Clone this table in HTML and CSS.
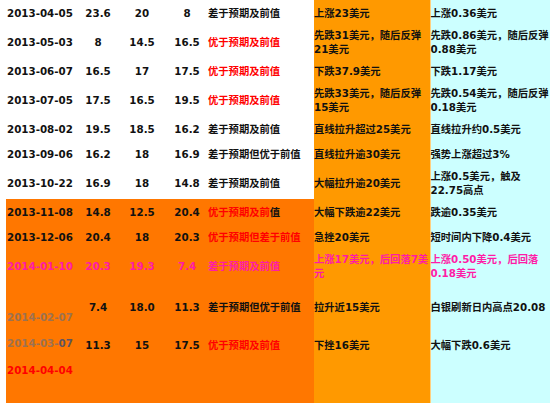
FILE: index.html
```html
<!DOCTYPE html>
<html>
<head>
<meta charset="utf-8">
<link rel="stylesheet" href="styles.css">
</head>
<body>
<table class="data">
  <colgroup>
    <col class="c-date"><col class="c-a"><col class="c-b"><col class="c-c"><col class="c-txt"><col class="c-gold"><col class="c-silver">
  </colgroup>
  <tbody>
    <tr class="one">
      <td class="date">2013-04-05</td><td class="num">23.6</td><td class="num">20</td><td class="num">8</td>
      <td class="txt">差于预期及前值</td><td class="gold">上涨23美元</td><td class="silver">上涨0.36美元</td>
    </tr>
    <tr class="two">
      <td class="date">2013-05-03</td><td class="num">8</td><td class="num">14.5</td><td class="num">16.5</td>
      <td class="txt red">优于预期及前值</td><td class="gold">先跌31美元，随后反弹<br>21美元</td><td class="silver">先跌0.86美元，随后反弹<br>0.88美元</td>
    </tr>
    <tr class="one">
      <td class="date">2013-06-07</td><td class="num">16.5</td><td class="num">17</td><td class="num">17.5</td>
      <td class="txt red">优于预期及前值</td><td class="gold">下跌37.9美元</td><td class="silver">下跌1.17美元</td>
    </tr>
    <tr class="two">
      <td class="date">2013-07-05</td><td class="num">17.5</td><td class="num">16.5</td><td class="num">19.5</td>
      <td class="txt red">优于预期及前值</td><td class="gold">先跌33美元，随后反弹<br>15美元</td><td class="silver">先跌0.54美元，随后反弹<br>0.18美元</td>
    </tr>
    <tr class="one">
      <td class="date">2013-08-02</td><td class="num">19.5</td><td class="num">18.5</td><td class="num">16.2</td>
      <td class="txt">差于预期及前值</td><td class="gold">直线拉升超过25美元</td><td class="silver">直线拉升约0.5美元</td>
    </tr>
    <tr class="one">
      <td class="date">2013-09-06</td><td class="num">16.2</td><td class="num">18</td><td class="num">16.9</td>
      <td class="txt">差于预期但优于前值</td><td class="gold">直线拉升逾30美元</td><td class="silver">强势上涨超过3%</td>
    </tr>
    <tr class="two">
      <td class="date">2013-10-22</td><td class="num">16.9</td><td class="num">18</td><td class="num">14.8</td>
      <td class="txt">差于预期及前值</td><td class="gold">大幅拉升逾20美元</td><td class="silver">上涨0.5美元，触及<br>22.75高点</td>
    </tr>
    <tr class="one low">
      <td class="date">2013-11-08</td><td class="num">14.8</td><td class="num">12.5</td><td class="num">20.4</td>
      <td class="txt"><span class="red">优于预期及前</span>值</td><td class="gold">大幅下跌逾22美元</td><td class="silver">跌逾0.35美元</td>
    </tr>
    <tr class="one low">
      <td class="date">2013-12-06</td><td class="num">20.4</td><td class="num">18</td><td class="num">20.3</td>
      <td class="txt red">优于预期但差于前值</td><td class="gold">急挫20美元</td><td class="silver">短时间内下降0.4美元</td>
    </tr>
    <tr class="two low pink">
      <td class="date">2014-01-10</td><td class="num">20.3</td><td class="num">19.3</td><td class="num">7.4</td>
      <td class="txt">差于预期及前值</td><td class="gold">上涨17美元，后回落7美<br>元</td><td class="silver">上涨0.50美元，后回落<br>0.18美元</td>
    </tr>
    <tr class="tall low">
      <td class="date grey drop">2014-02-07</td><td class="num">7.4</td><td class="num">18.0</td><td class="num">11.3</td>
      <td class="txt">差于预期但优于前值</td><td class="gold">拉升近15美元</td><td class="silver">白银刷新日内高点20.08</td>
    </tr>
    <tr class="one low">
      <td class="date grey lift">2014-03-<span class="dark">07</span></td><td class="num">11.3</td><td class="num">15</td><td class="num">17.5</td>
      <td class="txt red">优于预期及前值</td><td class="gold">下挫16美元</td><td class="silver">大幅下跌0.6美元</td>
    </tr>
    <tr class="one low">
      <td class="date red">2014-04-04</td><td class="num"></td><td class="num"></td><td class="num"></td>
      <td class="txt"></td><td class="gold"></td><td class="silver"></td>
    </tr>
    <tr class="filler low">
      <td class="date"></td><td class="num"></td><td class="num"></td><td class="num"></td>
      <td class="txt"></td><td class="gold"></td><td class="silver"></td>
    </tr>
  </tbody>
</table>
</body>
</html>
```
FILE: styles.css
```css
html, body {
  margin: 0;
  padding: 0;
  background: #ffffff;
}

body {
  padding-left: 6px;
  overflow: hidden;
}

.data {
  border-collapse: collapse;
  border-spacing: 0;
  table-layout: fixed;
  width: 544px;
  font-family: "DejaVu Sans", "Noto Sans CJK SC", sans-serif;
  font-weight: bold;
  font-size: 10.3px;
  line-height: 14px;
  color: #111111;
}

.c-date { width: 74px; }
.c-a { width: 36px; }
.c-b { width: 52px; }
.c-c { width: 38px; }
.c-txt { width: 108px; }
.c-gold { width: 116px; }
.c-silver { width: 120px; }

.data td {
  padding: 0;
  vertical-align: middle;
  white-space: nowrap;
  overflow: visible;
  box-sizing: border-box;
}

tr.one td { height: 25px; }
tr.two td { height: 33px; }
tr.tall td { height: 50px; }
tr.filler td { height: 40px; }

.date {
  padding-left: 1px !important;
  text-align: left;
}

.num { text-align: center; }

.txt {
  padding-left: 2px !important;
  text-align: left;
}

.gold {
  background: #ff9900;
  text-align: left;
}

.silver {
  background: #ccffff;
  border-left: 1px solid #ffd080;
  text-align: left;
}

tr.low td:not(.gold):not(.silver) {
  background: #ff7700;
}

.red { color: #ff0000; }

tr.pink td { color: #ff1ca6; }

.grey { color: #9c7250; }
.dark { color: #5e5560; }

.drop { padding-top: 20px !important; }
.lift { padding-bottom: 4px !important; }
```
